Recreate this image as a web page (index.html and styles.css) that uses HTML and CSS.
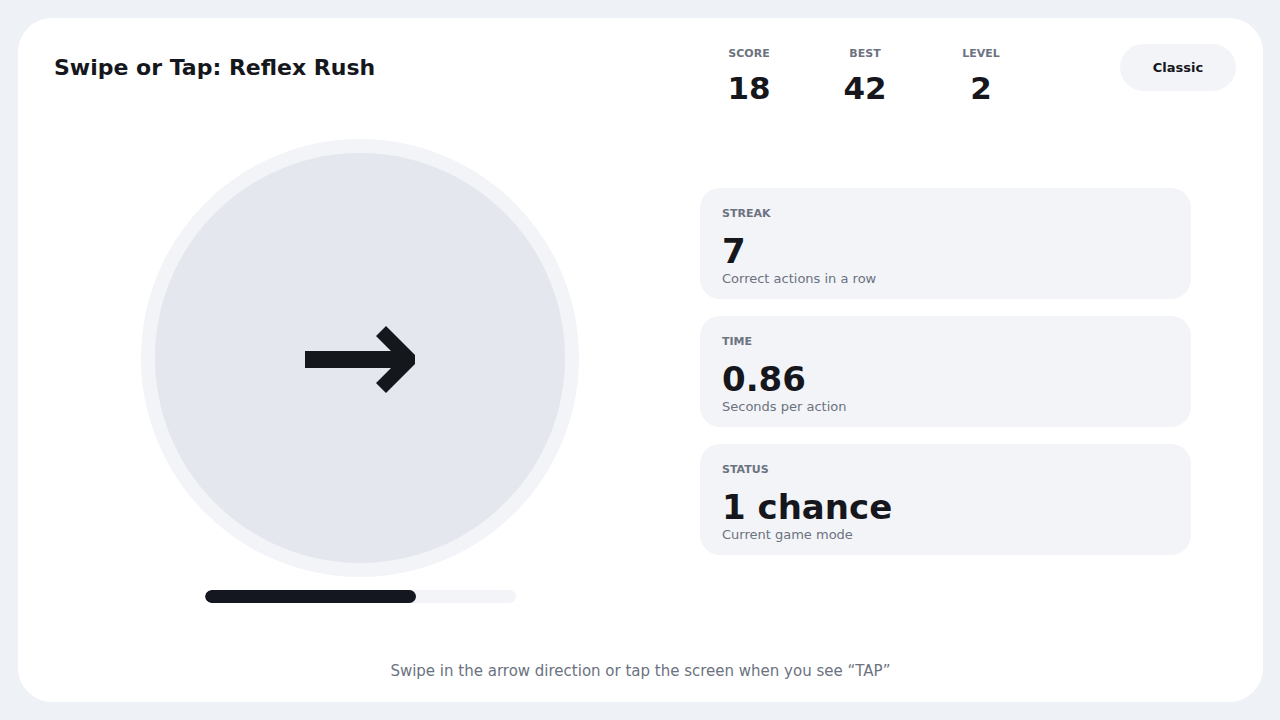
FILE: index.html
```html
<!DOCTYPE html>
<html lang="en">
<head>
    <meta charset="UTF-8">
    <meta name="viewport" content="width=device-width, initial-scale=1.0">
    <title>Swipe or Tap: Reflex Rush</title>
    <link rel="stylesheet" href="styles.css">
</head>
<body>
    <div class="game">
        <header class="top">
            <h1>Swipe or Tap: Reflex Rush</h1>
            <div class="stats">
                <div class="stat">
                    <div class="stat-label">SCORE</div>
                    <div class="stat-value">18</div>
                </div>
                <div class="stat">
                    <div class="stat-label">BEST</div>
                    <div class="stat-value">42</div>
                </div>
                <div class="stat">
                    <div class="stat-label">LEVEL</div>
                    <div class="stat-value">2</div>
                </div>
            </div>
            <button class="mode">Classic</button>
        </header>

        <main class="board">
            <div class="play">
                <div class="pad">
                    <svg class="arrow" width="110" height="67" viewBox="0 0 110 67">
                        <polygon points="0,25 86,25 71,10 81,0 110,29 110,38 81,67 71,57 86,42 0,42" fill="currentColor"/>
                    </svg>
                </div>
                <div class="timer">
                    <div class="timer-fill" style="width: 68%"></div>
                </div>
            </div>

            <div class="cards">
                <div class="card">
                    <div class="card-label">STREAK</div>
                    <div class="card-value">7</div>
                    <div class="card-desc">Correct actions in a row</div>
                </div>
                <div class="card">
                    <div class="card-label">TIME</div>
                    <div class="card-value">0.86</div>
                    <div class="card-desc">Seconds per action</div>
                </div>
                <div class="card">
                    <div class="card-label">STATUS</div>
                    <div class="card-value">1 chance</div>
                    <div class="card-desc">Current game mode</div>
                </div>
            </div>
        </main>

        <footer class="hint">Swipe in the arrow direction or tap the screen when you see “TAP”</footer>
    </div>
</body>
</html>
```

FILE: styles.css
```css
* {
    box-sizing: border-box;
}
body {
    font-family: "DejaVu Sans", sans-serif;
    background-color: #eef1f5;
    margin: 0;
    padding: 18px 17px 18px 18px;
    color: #15171c;
}
.game {
    height: 684px;
    background-color: #fff;
    border-radius: 34px;
    padding: 26px 27px 21px 36px;
    display: flex;
    flex-direction: column;
}
.top {
    display: flex;
    align-items: flex-start;
    height: 62px;
}
h1 {
    margin: 0;
    font-size: 22px;
    line-height: 47px;
    font-weight: bold;
}
.stats {
    display: flex;
    gap: 16px;
    margin-left: auto;
    margin-right: 89px;
    padding-top: 2px;
}
.stat {
    width: 100px;
    text-align: center;
}
.stat-label {
    font-size: 11px;
    line-height: 16px;
    font-weight: bold;
    color: #6b7280;
}
.stat-value {
    margin-top: 9px;
    font-size: 31px;
    line-height: 34px;
    font-weight: bold;
}
.mode {
    font-family: inherit;
    font-size: 13px;
    font-weight: bold;
    color: #15171c;
    background-color: #f3f4f7;
    border: none;
    border-radius: 24px;
    height: 47px;
    width: 116px;
}
.board {
    flex: 1;
    display: grid;
    grid-template-columns: 612px 491px;
    column-gap: 34px;
    align-items: center;
}
.play {
    display: flex;
    flex-direction: column;
    align-items: center;
    gap: 13px;
}
.pad {
    width: 438px;
    height: 438px;
    border-radius: 50%;
    border: 14px solid #f3f4f7;
    background-color: #e4e7ee;
    display: flex;
    align-items: center;
    justify-content: center;
    color: #14171c;
}
.arrow {
    margin-top: 2px;
}
.timer {
    width: 311px;
    height: 13px;
    border-radius: 7px;
    background-color: #f3f4f7;
    overflow: hidden;
}
.timer-fill {
    height: 100%;
    border-radius: 7px;
    background-color: #14171f;
}
.cards {
    display: flex;
    flex-direction: column;
    gap: 17px;
}
.card {
    height: 111px;
    background-color: #f3f4f7;
    border-radius: 20px;
    padding: 19px 22px 11px;
}
.card-label {
    font-size: 11px;
    line-height: 14px;
    font-weight: bold;
    color: #6b7280;
}
.card-value {
    margin-top: 12px;
    font-size: 34px;
    line-height: 37px;
    font-weight: bold;
}
.card-desc {
    font-size: 13px;
    line-height: 18px;
    color: #6b7280;
}
.hint {
    margin-top: 25px;
    padding-right: 9px;
    text-align: center;
    font-size: 15px;
    line-height: 20px;
    color: #6b7280;
}
```
